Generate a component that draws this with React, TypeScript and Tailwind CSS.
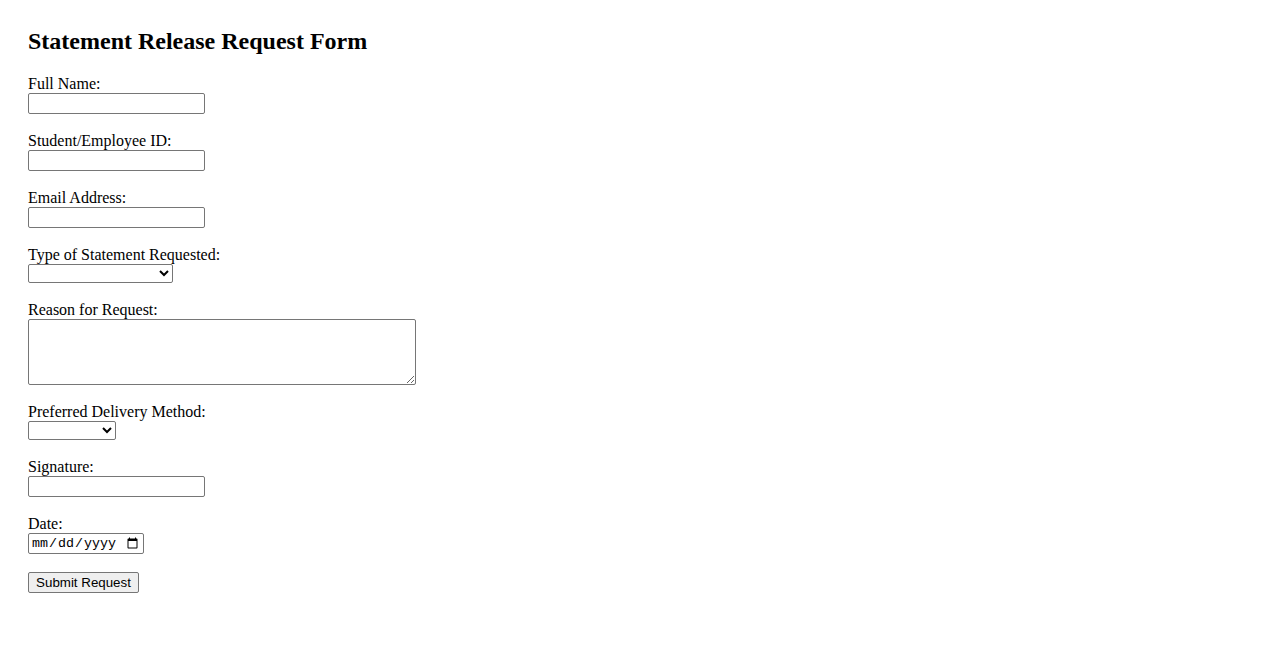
export default function App() {
  const label = "block leading-[18px] text-[16px]";
  const text =
    "block w-[177px] h-[21px] border border-[#767676] rounded-[2px] px-[2px] bg-white text-[13.33px] font-['Liberation_Sans',Arial,sans-serif]";
  const select =
    "block h-[19px] border border-[#767676] rounded-[2px] bg-white text-[13.33px] font-['Liberation_Sans',Arial,sans-serif]";

  return (
    <div className="min-h-screen bg-white text-black font-['Liberation_Serif','Times_New_Roman',serif] px-[28px] pt-[27px]">
      <h2 className="text-[24px] font-bold leading-[28px] mb-[20px]">
        Statement Release Request Form
      </h2>
      <form className="flex flex-col" onSubmit={(e) => e.preventDefault()}>
        <div className="mb-[18px]">
          <label className={label} htmlFor="fullName">Full Name:</label>
          <input id="fullName" type="text" className={text} />
        </div>
        <div className="mb-[18px]">
          <label className={label} htmlFor="sid">Student/Employee ID:</label>
          <input id="sid" type="text" className={text} />
        </div>
        <div className="mb-[18px]">
          <label className={label} htmlFor="email">Email Address:</label>
          <input id="email" type="email" className={text} />
        </div>
        <div className="mb-[18px]">
          <label className={label} htmlFor="stype">Type of Statement Requested:</label>
          <select id="stype" className={select + " w-[145px]"}>
            <option value=""></option>
            <option>Transcript</option>
            <option>Employment Verification</option>
          </select>
        </div>
        <div className="mb-[18px]">
          <label className={label} htmlFor="reason">Reason for Request:</label>
          <textarea
            id="reason"
            className="block w-[388px] h-[66px] border border-[#767676] rounded-[2px] bg-white resize text-[13.33px] font-['Liberation_Mono',monospace]"
          />
        </div>
        <div className="mb-[18px]">
          <label className={label} htmlFor="delivery">Preferred Delivery Method:</label>
          <select id="delivery" className={select + " w-[88px]"}>
            <option value=""></option>
            <option>Email</option>
            <option>Mail</option>
          </select>
        </div>
        <div className="mb-[18px]">
          <label className={label} htmlFor="sig">Signature:</label>
          <input id="sig" type="text" className={text} />
        </div>
        <div className="mb-[16px]">
          <label className={label} htmlFor="date">Date:</label>
          <input
            id="date"
            type="date"
            className="block w-[116px] h-[21px] border border-[#767676] rounded-[2px] px-[2px] bg-white text-[13.33px] font-['Liberation_Mono',monospace]"
          />
        </div>
        <div>
          <button
            type="submit"
            className="w-[111px] h-[21px] border border-[#767676] rounded-[2px] bg-[#efefef] text-[13.33px] leading-none font-['Liberation_Sans',Arial,sans-serif]"
          >
            Submit Request
          </button>
        </div>
      </form>
    </div>
  );
}
